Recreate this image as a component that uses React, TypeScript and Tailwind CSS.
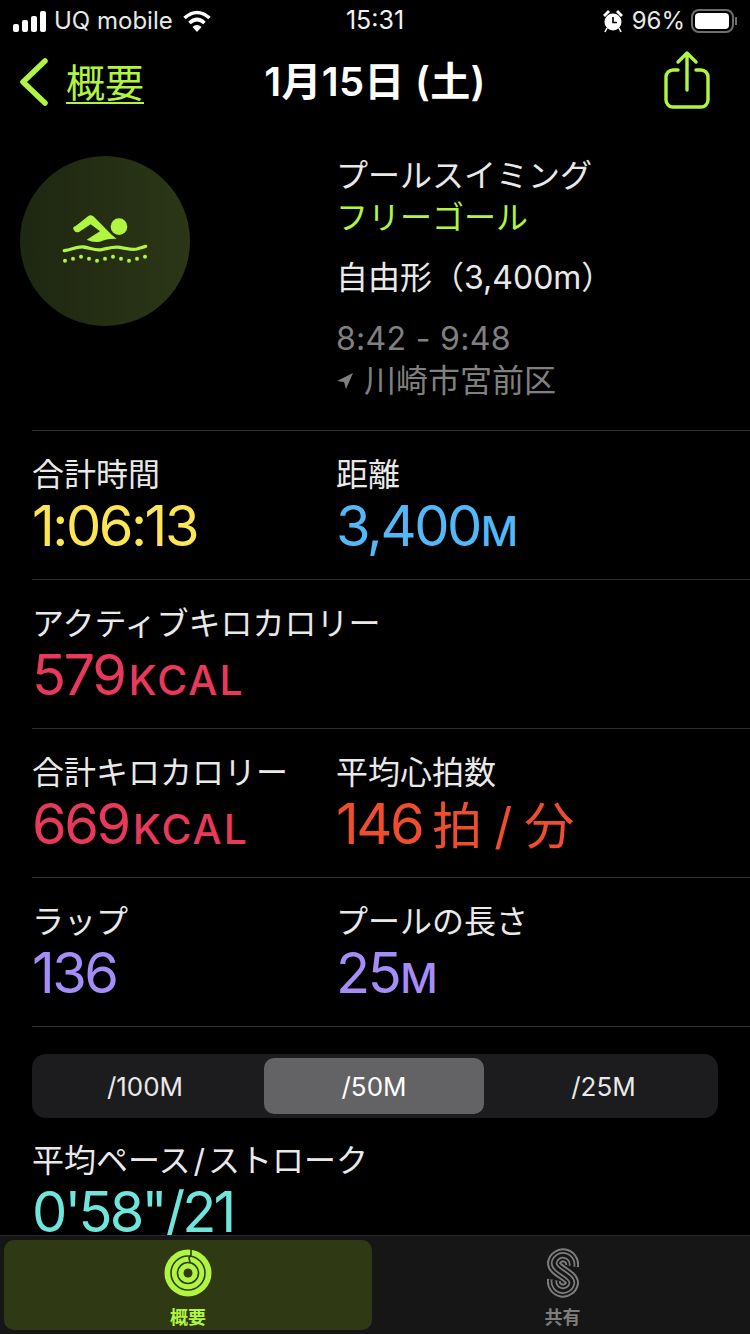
const font = { fontFamily: '"Inter", "Noto Sans CJK JP", sans-serif' };

type Stat = { label: string; value: string; unit?: string; color: string };

const rows: Stat[][] = [
  [
    { label: '合計時間', value: '1:06:13', color: 'text-[#fde554]' },
    { label: '距離', value: '3,400', unit: 'M', color: 'text-[#52b8f7]' },
  ],
  [{ label: 'アクティブキロカロリー', value: '579', unit: 'KCAL', color: 'text-[#e8395b]' }],
  [
    { label: '合計キロカロリー', value: '669', unit: 'KCAL', color: 'text-[#e8395b]' },
    { label: '平均心拍数', value: '146', color: 'text-[#ee4d2e]' },
  ],
  [
    { label: 'ラップ', value: '136', color: 'text-[#a58df8]' },
    { label: 'プールの長さ', value: '25', unit: 'M', color: 'text-[#a58df8]' },
  ],
];

function SwimIcon() {
  const dots = [
    [195, 363], [219, 357], [243, 351], [267, 357], [291, 363], [315, 357],
    [339, 351], [363, 357], [387, 363], [411, 357], [435, 351],
  ];
  return (
    <svg viewBox="180 220 270 150" className="w-[90px] h-[50px] -mt-[6px]" fill="#b0f53f">
      <circle cx="357" cy="261" r="25" />
      <path d="M228 258 L265 229 Q272 224 280 230 L335 285 L350 297 Q320 296 300 306 Q280 310 260 300 L300 275 L272 254 L238 276 Q228 282 221 270 Q216 262 228 258Z" />
      <path
        d="M193 333 C215 330 230 320 250 322 C270 324 285 334 305 330 C325 326 340 320 360 323 C380 326 395 332 410 328 L437 320"
        fill="none"
        stroke="#b0f53f"
        strokeWidth="10"
        strokeLinecap="round"
      />
      {dots.map(([x, y]) => (
        <circle key={x} cx={x} cy={y} r="6" />
      ))}
    </svg>
  );
}

function RingsIcon() {
  return (
    <svg viewBox="0 0 48 48" className="w-12 h-12" fill="none">
      <circle cx="24" cy="24" r="23.5" fill="#b0f53f" />
      <circle cx="24" cy="24" r="17" stroke="#2f3a14" strokeWidth="1.6" />
      <circle cx="24" cy="24" r="10.5" stroke="#2f3a14" strokeWidth="1.6" />
      <circle cx="24" cy="24" r="4.5" fill="#2f3a14" />
      <path d="M27 0 L27 6 L25 9 L26 13" stroke="#2f3a14" strokeWidth="1.6" />
    </svg>
  );
}

function SharingIcon() {
  const d = 'M25 19 A9 9 0 1 0 7 16 C7 24 25 28 25 36 A9 9 0 1 1 7 33';
  return (
    <svg viewBox="0 0 32 52" className="w-8 h-[52px]" fill="none">
      <path d={d} stroke="#7d7d7d" strokeWidth="14" />
      <path d={d} stroke="#161616" strokeWidth="10" />
      <path d={d} stroke="#7d7d7d" strokeWidth="6.5" />
      <path d={d} stroke="#161616" strokeWidth="3" />
    </svg>
  );
}

function StatusBar() {
  return (
    <div className="h-10 shrink-0 flex items-center justify-between text-white text-[24px] pl-[13px] pr-[13px] pt-[2px]">
      <div className="flex items-center w-[272px]">
        <div className="flex items-end gap-[3px] h-[21px] mr-[8px]">
          <div className="w-[6px] h-[8px] bg-white rounded-[2px]" />
          <div className="w-[6px] h-[12px] bg-white rounded-[2px]" />
          <div className="w-[6px] h-[16px] bg-white rounded-[2px]" />
          <div className="w-[6px] h-[21px] bg-white rounded-[2px]" />
        </div>
        <span className="text-[#e8e8e8]">UQ mobile</span>
        <svg viewBox="0 0 28 22" className="w-7 h-[22px] ml-[10px]" fill="none" stroke="white" strokeWidth="3.6">
          <path d="M1.5 8 Q14 -3 26.5 8" />
          <path d="M6.5 13 Q14 6 21.5 13" />
          <path d="M14 22 L9.5 17 Q14 13 18.5 17Z" fill="white" stroke="none" />
        </svg>
      </div>
      <span className="text-[#f2f2f2] text-[25px]">15:31</span>
      <div className="flex items-center justify-end w-[272px]">
        <svg viewBox="0 0 22 24" className="w-[22px] h-6" fill="white">
          <circle cx="11" cy="13" r="8.5" />
          <path d="M1 6 L6 1 L8 3 L3 8Z M21 6 L16 1 L14 3 L19 8Z" />
          <path d="M11 8 V13.5 H15" stroke="#000" strokeWidth="1.6" fill="none" />
          <path d="M5 19 L3 23 M17 19 L19 23" stroke="white" strokeWidth="1.6" />
        </svg>
        <span className="ml-2 text-[#e8e8e8]">96%</span>
        <div className="ml-[6px] w-[43px] h-6 border-2 border-[#6e6e6e] rounded-[8px] p-[2px]">
          <div className="w-[34px] h-full bg-white rounded-[4px]" />
        </div>
        <div className="w-[2px] h-2 bg-[#6e6e6e] ml-[1px]" />
      </div>
    </div>
  );
}

function NavBar() {
  return (
    <div className="h-[84px] shrink-0 flex items-center justify-between pl-5 pr-[39px]">
      <div className="flex items-center w-[200px]">
        <svg viewBox="0 0 28 48" className="w-7 h-12" fill="none" stroke="#b0f53f" strokeWidth="5.5" strokeLinecap="round" strokeLinejoin="round">
          <path d="M25 3 L3 24 L25 45" />
        </svg>
        <span className="ml-[18px] text-[39px] leading-none text-[#b0f53f] underline underline-offset-[5px] decoration-2">概要</span>
      </div>
      <span className="text-white text-[40px] font-semibold leading-none tracking-[0.3px] whitespace-nowrap">1月15日 (土)</span>
      <div className="w-[181px] flex justify-end">
        <svg viewBox="0 0 48 60" className="w-12 h-[60px] -mt-1" fill="none" stroke="#b0f53f" strokeWidth="3.4" strokeLinecap="round" strokeLinejoin="round">
          <path d="M15 20 H10 A7 7 0 0 0 3 27 V50 A7 7 0 0 0 10 57 H38 A7 7 0 0 0 45 50 V27 A7 7 0 0 0 38 20 H33" />
          <path d="M24 40 V3 M15 12 L24 3 L33 12" />
        </svg>
      </div>
    </div>
  );
}

function StatCell({ stat }: { stat: Stat }) {
  return (
    <div className="w-[304px] shrink-0">
      <div className="text-[32px] leading-[41px] text-[#e9e9e9] whitespace-nowrap">{stat.label}</div>
      <div className={`text-[56px] leading-[62px] tracking-[-2.5px] whitespace-nowrap ${stat.color}`}>
        {stat.value}
        {stat.unit === 'M' && <span className="text-[41px] font-medium ml-[1px]">M</span>}
        {stat.unit === 'KCAL' && <span className="text-[41px] font-medium tracking-[2px] ml-[4px]">KCAL</span>}
        {stat.label === '平均心拍数' && <span className="text-[50px] tracking-[-1px] ml-[10px]">拍 / 分</span>}
      </div>
    </div>
  );
}

export default function App() {
  return (
    <div className="w-[750px] h-[1334px] bg-black overflow-hidden flex flex-col" style={font}>
      <StatusBar />
      <NavBar />
      <div className="flex-1 min-h-0">
        <div className="flex pl-5 pt-[31px] h-[306px]">
          <div className="w-[170px] h-[170px] mt-[1px] rounded-full bg-gradient-to-r from-[#1e2710] to-[#2c3617] flex items-center justify-center">
            <SwimIcon />
          </div>
          <div className="ml-[146px] text-[32px] leading-[42px] text-[#e9e9e9] whitespace-nowrap">
            <div>プールスイミング</div>
            <div className="text-[#b0f53f]">フリーゴール</div>
            <div className="mt-[18px]">自由形（3,400m）</div>
            <div className="mt-[19px] text-[#808080] tracking-[0.3px]">8:42 - 9:48</div>
            <div className="flex items-center text-[#808080]">
              <svg viewBox="0 0 18 18" className="w-[18px] h-[18px] mr-[10px]" fill="#808080">
                <path d="M17 1 L1 9 L8 10 L10 17Z" />
              </svg>
              川崎市宮前区
            </div>
          </div>
        </div>
        <div className="ml-8">
          {rows.map((row) => (
            <div key={row[0].label} className="h-[149px] border-t border-[#303030] flex pt-[23px]">
              {row.map((stat) => (
                <StatCell key={stat.label} stat={stat} />
              ))}
            </div>
          ))}
          <div className="border-t border-[#303030] pt-[27px]">
            <div className="w-[686px] h-16 bg-[#1c1c1e] rounded-[14px] p-1 flex text-[26px] text-[#e9e9e9]">
              <div className="w-[228px] flex items-center justify-center pr-[10px]">/100M</div>
              <div className="w-[220px] flex items-center justify-center bg-[#636366] rounded-[10px] text-white">/50M</div>
              <div className="flex-1 flex items-center justify-center pl-[9px]">/25M</div>
            </div>
            <div className="mt-[23px] text-[32px] leading-[39px] text-[#e9e9e9] whitespace-nowrap">
              平均ペース<span className="mx-[3px]">/</span>ストローク
            </div>
            <div className="mt-[9px] text-[56px] leading-[46px] tracking-[-2.8px] text-[#6fe6dc] whitespace-nowrap">0'58"/21</div>
          </div>
        </div>
      </div>
      <div className="h-[99px] shrink-0 bg-[#161616] border-t border-[#2a2a2a] flex pt-1 pl-1">
        <div className="w-[368px] h-[90px] bg-[#2f3a14] rounded-[10px] flex flex-col items-center pt-[9px]">
          <RingsIcon />
          <span className="text-[18px] leading-[22px] font-semibold text-[#b0f53f] mt-[10px]">概要</span>
        </div>
        <div className="flex-1 flex flex-col items-center pt-[7px] pl-[3px]">
          <SharingIcon />
          <span className="text-[18px] leading-[22px] font-semibold text-[#7d7d7d] mt-[8px]">共有</span>
        </div>
      </div>
    </div>
  );
}
